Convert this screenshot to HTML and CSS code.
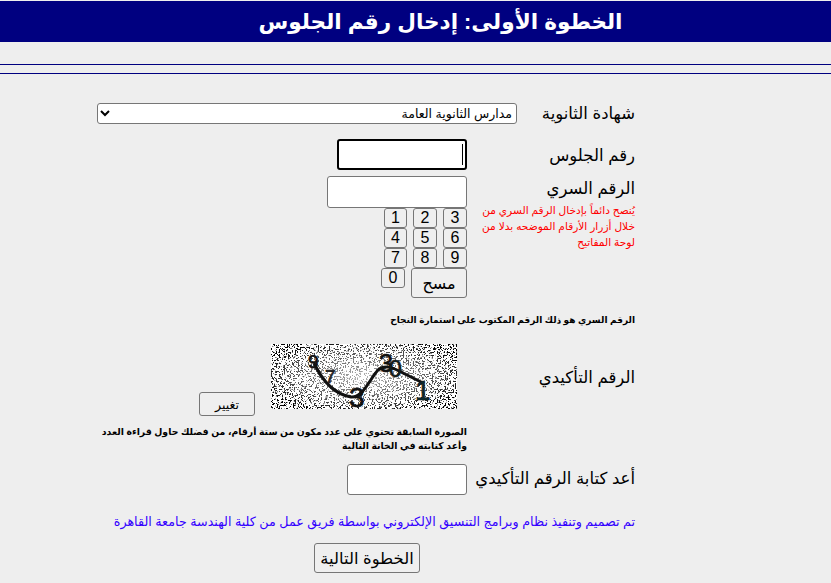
FILE: index.html
```html
<!DOCTYPE html>
<html lang="ar" dir="rtl">
<head>
    <meta charset="UTF-8">
    <title>الخطوة الأولى: إدخال رقم الجلوس</title>
    <link rel="stylesheet" href="styles.css">
</head>
<body>
    <h1 class="page-title">الخطوة الأولى: إدخال رقم الجلوس</h1>
    <hr class="rule rule-first">
    <hr class="rule rule-second">

    <form class="step-form">
        <div class="row row-school">
            <label class="field-label label-school" for="school">شهادة الثانوية</label>
            <select class="school-select" id="school">
                <option>مدارس الثانوية العامة</option>
            </select>
        </div>

        <div class="row row-seat">
            <label class="field-label label-col" for="seat">رقم الجلوس</label>
            <div class="seat-box">
                <input class="text-input seat-input" id="seat" type="text">
                <span class="caret"></span>
            </div>
        </div>

        <div class="row row-secret">
            <div class="label-col">
                <label class="field-label" for="secret">الرقم السري</label>
                <p class="secret-note">يُنصح دائماً بإدخال الرقم السري من خلال أزرار الأرقام الموضحه بدلا من لوحة المفاتيح</p>
            </div>
            <div class="secret-col">
                <input class="text-input secret-input" id="secret" type="password">
                <div class="keypad">
                    <button class="key" type="button">3</button>
                    <button class="key" type="button">2</button>
                    <button class="key" type="button">1</button>
                    <button class="key" type="button">6</button>
                    <button class="key" type="button">5</button>
                    <button class="key" type="button">4</button>
                    <button class="key" type="button">9</button>
                    <button class="key" type="button">8</button>
                    <button class="key" type="button">7</button>
                </div>
                <div class="keypad-last">
                    <button class="clear-key" type="button">مسح</button>
                    <button class="key zero-key" type="button">0</button>
                </div>
            </div>
        </div>

        <p class="hint hint-secret">الرقم السري هو ذلك الرقم المكتوب على استمارة النجاح</p>

        <div class="row row-captcha">
            <div class="field-label label-col label-captcha">الرقم التأكيدي</div>
            <div class="captcha-col">
                <div class="captcha-line">
                    <svg class="captcha" viewBox="0 0 186 65" width="186" height="65" xmlns="http://www.w3.org/2000/svg">
                        <defs>
                            <filter id="speckle" x="0" y="0" width="100%" height="100%">
                                <feTurbulence type="fractalNoise" baseFrequency="0.62" numOctaves="2" seed="7"/>
                                <feColorMatrix type="matrix" values="0 0 0 0 0  0 0 0 0 0  0 0 0 0 0  12 12 0 0 -12.6"/>
                            </filter>
                            <radialGradient id="fade" cx="50%" cy="50%" r="58%">
                                <stop offset="0%" stop-color="#fff" stop-opacity="0.7"/>
                                <stop offset="70%" stop-color="#fff" stop-opacity="0.3"/>
                                <stop offset="100%" stop-color="#fff" stop-opacity="0"/>
                            </radialGradient>
                        </defs>
                        <rect width="186" height="65" fill="#fff"/>
                        <rect width="186" height="65" filter="url(#speckle)"/>
                        <rect width="186" height="65" fill="url(#fade)"/>
                        <path d="M43 19 C50 34 62 50 80 53 C92 54 98 36 107 26 C114 20 122 24 128 27 L152 39" fill="none" stroke="#111" stroke-width="3"/>
                        <g class="captcha-digits" direction="ltr">
                            <text x="37" y="24" font-size="19">9</text>
                            <text x="54" y="39" font-size="19" fill="#333">7</text>
                            <text x="78" y="63" font-size="28">3</text>
                            <text x="108" y="28" font-size="25">3</text>
                            <text x="118" y="33" font-size="23" fill="#122">0</text>
                            <text x="144" y="56" font-size="28" fill="#0b2d33">1</text>
                        </g>
                    </svg>
                    <button class="change-btn" type="button">تغيير</button>
                </div>
                <p class="hint hint-captcha">الصورة السابقة تحتوي على عدد مكون من ستة أرقام، من فضلك حاول قراءة العدد وأعد كتابته في الخانة التالية</p>
            </div>
        </div>

        <div class="row row-repeat">
            <label class="field-label label-col" for="repeat">أعد كتابة الرقم التأكيدي</label>
            <input class="text-input repeat-input" id="repeat" type="text">
        </div>

        <p class="credit">تم تصميم وتنفيذ نظام وبرامج التنسيق الإلكتروني بواسطة فريق عمل من كلية الهندسة جامعة القاهرة</p>

        <div class="next-wrap">
            <button class="next-btn" type="submit">الخطوة التالية</button>
        </div>
    </form>
</body>
</html>
```

FILE: styles.css
```css
html, body {
    height: 100%;
}
body {
    margin: 0;
    background: #eeeeee;
    color: #000;
    font-family: "Liberation Sans", "DejaVu Sans", sans-serif;
    overflow: hidden;
}
.page-title {
    margin: 1px 0 0 0;
    height: 41px;
    line-height: 41px;
    background: #000080;
    color: #fff;
    font-size: 21.6px;
    font-weight: bold;
    text-align: center;
    padding-left: 50px;
    box-sizing: border-box;
}
.rule {
    margin: 0;
    border: none;
    height: 1px;
    background: #000080;
}
.rule-first {
    margin-top: 22px;
}
.rule-second {
    margin-top: 8px;
}
.step-form {
    padding: 29px 196px 0 0;
}
.row {
    display: flex;
    align-items: flex-start;
}
.field-label {
    font-size: 16.5px;
    line-height: 20px;
    display: block;
}
.label-col {
    width: 168px;
    flex: none;
}
.label-school {
    width: 118px;
    flex: none;
}
.school-select {
    width: 420px;
    height: 21px;
    font-family: "Liberation Sans", "DejaVu Sans", sans-serif;
    font-size: 12.5px;
    background: #fff;
    border: 1px solid #767676;
    border-radius: 3px;
}
.text-input {
    box-sizing: border-box;
    background: #fff;
    border: 1px solid #767676;
    border-radius: 3px;
    padding: 0;
    display: block;
}
.row-seat {
    margin-top: 15px;
}
.row-seat .field-label {
    padding-top: 6px;
}
.seat-box {
    position: relative;
}
.seat-input {
    width: 130px;
    height: 31px;
    border: 2px solid #000;
    outline: none;
}
.caret {
    position: absolute;
    top: 5px;
    right: 4px;
    width: 1px;
    height: 21px;
    background: #000;
}
.row-secret {
    margin-top: 6px;
}
.row-secret .field-label {
    padding-top: 2px;
}
.secret-note {
    margin: 4px 0 0 0;
    width: 163px;
    color: #ff0000;
    font-size: 10.6px;
    line-height: 16px;
}
.secret-col {
    width: 140px;
}
.secret-input {
    width: 140px;
    height: 32px;
}
.keypad {
    display: grid;
    grid-template-columns: 24px 24px 23px;
    column-gap: 6px;
    width: 84px;
}
.key {
    box-sizing: border-box;
    height: 20px;
    padding: 0;
    background: #efefef;
    border: 1px solid #767676;
    border-radius: 3px;
    font-family: "Liberation Sans", sans-serif;
    font-size: 16px;
    line-height: 18px;
    color: #000;
}
.keypad-last {
    display: flex;
    align-items: flex-start;
    column-gap: 6px;
}
.clear-key {
    box-sizing: border-box;
    width: 56px;
    height: 30px;
    padding: 0;
    background: #efefef;
    border: 1px solid #767676;
    border-radius: 3px;
    font-family: "Liberation Sans", "DejaVu Sans", sans-serif;
    font-size: 16px;
    color: #000;
}
.zero-key {
    width: 24px;
}
.hint {
    margin: 0;
    font-size: 9px;
    font-weight: bold;
    line-height: 14px;
}
.hint-secret {
    margin-top: 15px;
}
.row-captcha {
    margin-top: 17px;
}
.label-captcha {
    padding-top: 23px;
}
.captcha-col {
    width: 372px;
}
.captcha-line {
    display: flex;
    align-items: flex-end;
    padding-right: 10px;
    height: 72px;
}
.captcha {
    display: block;
    align-self: flex-start;
}
.captcha-digits {
    font-family: "Liberation Sans", sans-serif;
    fill: #111;
    stroke: #111;
    stroke-width: 0.7;
}
.change-btn {
    box-sizing: border-box;
    width: 56px;
    height: 24px;
    margin-right: 16px;
    padding: 0;
    background: #efefef;
    border: 1px solid #767676;
    border-radius: 3px;
    font-family: "Liberation Sans", "DejaVu Sans", sans-serif;
    font-size: 12.5px;
    color: #000;
}
.hint-captcha {
    margin-top: 9px;
    font-size: 9.3px;
}
.row-repeat {
    margin-top: 11px;
}
.row-repeat .field-label {
    padding-top: 4px;
}
.repeat-input {
    width: 120px;
    height: 31px;
}
.credit {
    margin: 19px 0 0 0;
    color: #3300ff;
    font-size: 12.7px;
    line-height: 16px;
    width: 522px;
    white-space: nowrap;
}
.next-wrap {
    width: 106px;
    margin: 13px 215px 0 0;
}
.next-btn {
    box-sizing: border-box;
    width: 106px;
    height: 30px;
    padding: 0;
    background: #efefef;
    border: 1px solid #767676;
    border-radius: 3px;
    font-family: "Liberation Sans", "DejaVu Sans", sans-serif;
    font-size: 16.4px;
    color: #000;
}
```
